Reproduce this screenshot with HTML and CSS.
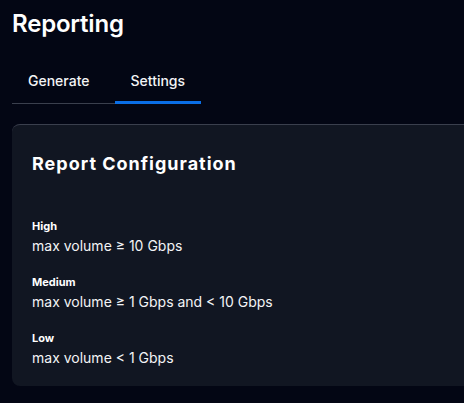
FILE: index.html
```html
<!DOCTYPE html>
<html lang="en">
<head>
<meta charset="utf-8">
<title>Reporting</title>
<link rel="stylesheet" href="styles.css">
</head>
<body>
<main class="page">
  <h1 class="page-title">Reporting</h1>
  <nav class="tabs">
    <button class="tab">Generate</button>
    <button class="tab tab-active">Settings</button>
  </nav>
  <section class="card">
    <h2 class="card-title">Report Configuration</h2>
    <dl class="levels">
      <div class="level">
        <dt class="level-name">High</dt>
        <dd class="level-rule">max volume ≥ 10 Gbps</dd>
      </div>
      <div class="level">
        <dt class="level-name">Medium</dt>
        <dd class="level-rule">max volume ≥ 1 Gbps and &lt; 10 Gbps</dd>
      </div>
      <div class="level">
        <dt class="level-name">Low</dt>
        <dd class="level-rule">max volume &lt; 1 Gbps</dd>
      </div>
    </dl>
  </section>
</main>
</body>
</html>
```
FILE: styles.css
```css
html, body {
  margin: 0;
  padding: 0;
  background: #030614;
  overflow: hidden;
}
body {
  font-family: Inter, "Noto Sans", sans-serif;
  color: #f3f4f6;
}
.page {
  padding: 8px 0 0 12px;
  overflow: hidden;
}
.page-title {
  margin: 0;
  font-size: 24px;
  line-height: 32px;
  font-weight: 600;
  letter-spacing: -0.2px;
  color: #ffffff;
}
.tabs {
  display: flex;
  gap: 9px;
  width: fit-content;
  margin-top: 19px;
  border-bottom: 1px solid #3a3f4d;
}
.tab {
  font-family: inherit;
  font-size: 14px;
  line-height: 20px;
  font-weight: 500;
  color: #f3f4f6;
  background: none;
  border: none;
  border-bottom: 3px solid transparent;
  margin-bottom: -1px;
  padding: 12px 16px 10px;
  cursor: pointer;
}
.tab-active {
  border-bottom-color: #0a6ee6;
}
.card {
  margin-top: 20px;
  margin-right: -40px;
  background: #111622;
  border-top: 1px solid #3a3f4d;
  border-radius: 8px;
  padding: 25px 20px 18px;
}
.card-title {
  margin: 0;
  font-size: 18px;
  line-height: 28px;
  font-weight: 700;
  letter-spacing: 1px;
  color: #ffffff;
}
.levels {
  margin: 40px 0 0;
  display: flex;
  flex-direction: column;
  gap: 18px;
}
.level {
  display: flex;
  flex-direction: column;
  gap: 2px;
}
.level-name {
  font-size: 11px;
  line-height: 16px;
  font-weight: 700;
  color: #ffffff;
}
.level-rule {
  margin: 0;
  font-size: 14px;
  line-height: 20px;
  color: #f3f4f6;
}
```
